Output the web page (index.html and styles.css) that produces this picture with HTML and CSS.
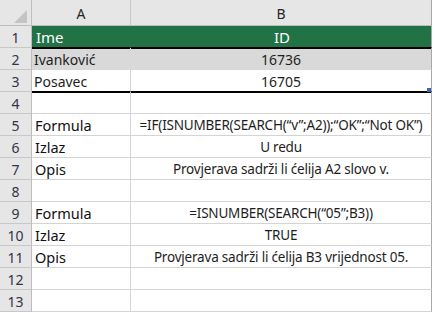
FILE: index.html
```html
<!DOCTYPE html>
<html>
<head>
<meta charset="utf-8">
<link rel="stylesheet" href="styles.css">
</head>
<body>
<div class="sheet">
  <div class="corner"><span class="tri"></span></div>
  <div class="colh">A</div>
  <div class="colh last">B</div>

  <div class="rowh">1</div>
  <div class="c green">Ime</div>
  <div class="c green ctr last">ID</div>

  <div class="rowh">2</div>
  <div class="c band below-thick">Ivanković</div>
  <div class="c band ctr last below-thick">16736</div>

  <div class="rowh">3</div>
  <div class="c thick">Posavec</div>
  <div class="c thick ctr last">16705<span class="handle"></span></div>

  <div class="rowh">4</div>
  <div class="c below-thick"></div>
  <div class="c last below-thick"></div>

  <div class="rowh">5</div>
  <div class="c lbl">Formula</div>
  <div class="c ctr last txt">=IF(ISNUMBER(SEARCH(“v”;A2));“OK”;“Not OK”)</div>

  <div class="rowh">6</div>
  <div class="c lbl">Izlaz</div>
  <div class="c ctr last txt">U redu</div>

  <div class="rowh">7</div>
  <div class="c lbl">Opis</div>
  <div class="c ctr last txt">Provjerava sadrži li ćelija A2 slovo v.</div>

  <div class="rowh">8</div>
  <div class="c"></div>
  <div class="c last"></div>

  <div class="rowh">9</div>
  <div class="c lbl">Formula</div>
  <div class="c ctr last txt">=ISNUMBER(SEARCH(“05”;B3))</div>

  <div class="rowh">10</div>
  <div class="c lbl">Izlaz</div>
  <div class="c ctr last txt">TRUE</div>

  <div class="rowh">11</div>
  <div class="c lbl">Opis</div>
  <div class="c ctr last txt">Provjerava sadrži li ćelija B3 vrijednost 05.</div>

  <div class="rowh">12</div>
  <div class="c"></div>
  <div class="c last"></div>

  <div class="rowh">13</div>
  <div class="c"></div>
  <div class="c last"></div>
</div>
</body>
</html>
```
FILE: styles.css
```css
html, body {
  margin: 0;
  padding: 0;
  background: #ffffff;
  overflow: hidden;
}
body {
  font-family: "Noto Sans", "Open Sans", sans-serif;
  color: #1e1e1e;
}
.sheet {
  display: grid;
  grid-template-columns: 32px 99px 301px;
  grid-template-rows: 26px;
  grid-auto-rows: 22px;
  width: 432px;
}
.sheet > div {
  box-sizing: border-box;
  display: flex;
  align-items: center;
  white-space: nowrap;
  overflow: visible;
}
.corner {
  background: #e6e6e6;
  border-right: 1px solid #bdbdbd;
  border-bottom: 1px solid #bdbdbd;
  position: relative;
}
.tri {
  position: absolute;
  right: 4px;
  bottom: 2px;
  width: 0;
  height: 0;
  border-left: 13px solid transparent;
  border-bottom: 13px solid #c4c4c4;
}
.colh {
  background: #e6e6e6;
  border-right: 1px solid #c8c8c8;
  border-bottom: 1px solid #bdbdbd;
  justify-content: center;
  font-size: 14px;
  color: #262626;
  padding-top: 1px;
}
.rowh {
  background: #e6e6e6;
  border-right: 1px solid #bdbdbd;
  border-bottom: 1px solid #c8c8c8;
  justify-content: center;
  font-size: 14px;
  color: #33334a;
  padding-top: 1px;
}
.c {
  border-right: 1px solid #d4d4d4;
  border-bottom: 1px solid #d4d4d4;
  padding: 1px 2px 0 2px;
  font-size: 14px;
  position: relative;
}
.c.last {
  border-right-color: #a8a8a8;
}
.colh.last {
  border-right-color: #a8a8a8;
}
.ctr {
  justify-content: center;
}
.txt {
  font-size: 13.5px;
  letter-spacing: -0.2px;
}
.green {
  background: #217346;
  color: #ffffff;
  border-right-color: #217346;
  border-bottom-color: #000000;
  font-size: 15px;
  padding-left: 4px;
}
.band {
  background: #d9d9d9;
  border-right-color: #d9d9d9;
  border-bottom-color: #d9d9d9;
}
.thick {
  border-bottom-color: #000000;
}
.below-thick {
  box-shadow: inset 0 1px 0 #000000;
}
.lbl {
  font-size: 14.5px;
  padding-left: 3px;
  color: #111111;
}
.handle {
  position: absolute;
  right: 0;
  bottom: -1px;
  width: 4px;
  height: 4px;
  background: #3a62b8;
}
```
